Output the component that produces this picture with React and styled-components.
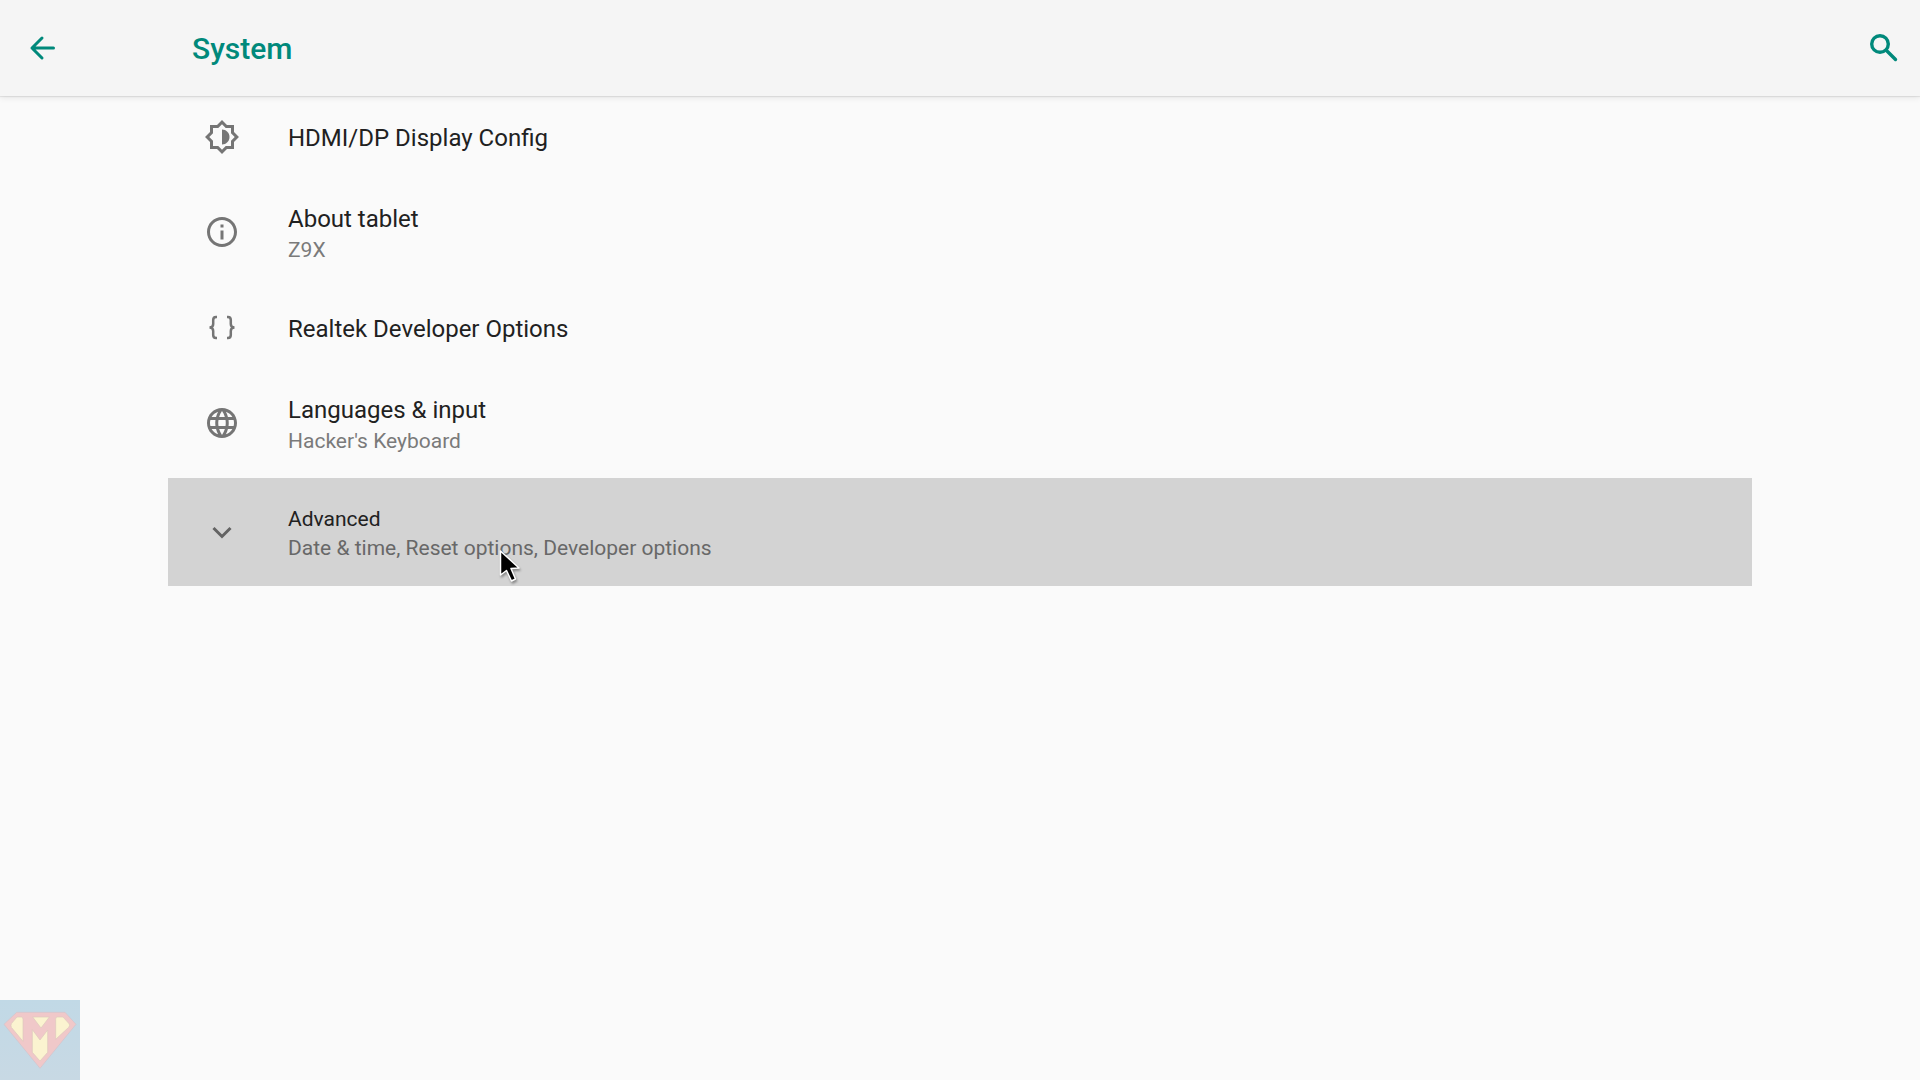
import React from "react";
import styled, { createGlobalStyle } from "styled-components";

const GlobalStyle = createGlobalStyle`
  *, *::before, *::after { box-sizing: border-box; }
  body {
    margin: 0;
    background: #fafafa;
    color: #212121;
    font-family: Roboto, "Noto Sans", sans-serif;
  }
`;

const Page = styled.div`
  min-height: 100vh;
  display: flex;
  flex-direction: column;
`;

const AppBar = styled.header`
  display: flex;
  align-items: center;
  height: 96px;
  padding: 0 18px 0 24px;
  background: #f5f5f5;
  color: #00897b;
  box-shadow: 0 1px 1px rgba(0, 0, 0, 0.08), 0 2px 6px rgba(0, 0, 0, 0.08);
`;

const IconButton = styled.button`
  display: flex;
  padding: 0;
  border: 0;
  background: none;
  color: inherit;
  cursor: inherit;
`;

const Title = styled.h1`
  flex: 1;
  margin: 0 0 0 132px;
  padding-top: 2px;
  font-size: 30px;
  line-height: 36px;
  font-weight: 500;
`;

const List = styled.ul`
  margin: 0;
  padding: 0 168px;
  list-style: none;
`;

const Row = styled.button`
  display: flex;
  align-items: center;
  gap: 48px;
  width: 100%;
  min-height: ${(p) => (p.$compact ? "108px" : p.$tall ? "110px" : "81px")};
  padding: 0 36px;
  border: 0;
  background: ${(p) => (p.$pressed ? "#d3d3d3" : "transparent")};
  color: inherit;
  font: inherit;
  text-align: left;
  cursor: inherit;
`;

const RowIcon = styled.span`
  display: flex;
  color: ${(p) => (p.$pressed ? "#636363" : "#757575")};
`;

const RowText = styled.span`
  display: flex;
  flex-direction: column;
  padding-top: 2px;
`;

const Label = styled.span`
  font-size: ${(p) => (p.$compact ? "21px" : "24px")};
  line-height: ${(p) => (p.$compact ? "30px" : "34px")};
`;

const Summary = styled.span`
  font-size: 21px;
  line-height: 28px;
  color: ${(p) => (p.$pressed ? "#686868" : "#7a7a7a")};
`;

const Pointer = styled.svg`
  position: absolute;
  left: 497px;
  top: 547px;
  pointer-events: none;
  filter: drop-shadow(1px 2px 1px rgba(0, 0, 0, 0.35));
`;

const Watermark = styled.svg`
  position: fixed;
  left: 0;
  bottom: 0;
`;

const Icon = ({ children }) => (
  <svg width="36" height="36" viewBox="0 0 24 24" fill="currentColor" aria-hidden="true">
    {children}
  </svg>
);

const LineIcon = ({ width = 3, cap = "round", children }) => (
  <svg
    width="36"
    height="36"
    viewBox="0 0 36 36"
    fill="none"
    stroke="currentColor"
    strokeWidth={width}
    strokeLinecap={cap}
    aria-hidden="true"
  >
    {children}
  </svg>
);

const BrightnessIcon = () => (
  <Icon>
    <path d="M20 8.69V4h-4.69L12 .69 8.69 4H4v4.69L.69 12 4 15.31V20h4.69L12 23.31 15.31 20H20v-4.69L23.31 12 20 8.69zm-2 5.79V18h-3.52L12 20.48 9.52 18H6v-3.52L3.52 12 6 9.52V6h3.52L12 3.52 14.48 6H18v3.52L20.48 12 18 14.48z" />
    <path d="M12 7v10c2.76 0 5-2.24 5-5s-2.24-5-5-5z" />
  </Icon>
);

const InfoIcon = () => (
  <Icon>
    <path d="M11 7h2v2h-2zm0 4h2v6h-2zm1-9C6.480 2 2 6.480 2 12s4.480 10 10 10 10-4.480 10-10S17.520 2 12 2zm0 18c-4.410 0-8-3.590-8-8s3.590-8 8-8 8 3.590 8 8-3.590 8-8 8z" />
  </Icon>
);

const BracesIcon = () => (
  <LineIcon width={2.5} cap="butt">
    <path d="M13 7H12Q9.200 7 9.200 10V14Q9.200 17.500 5.500 17.500Q9.200 17.500 9.200 21V25Q9.200 28 12 28H13" />
    <path d="M23 7H24Q26.800 7 26.800 10V14Q26.800 17.500 30.500 17.500Q26.800 17.500 26.800 21V25Q26.800 28 24 28H23" />
  </LineIcon>
);

const GlobeIcon = () => (
  <Icon>
    <path d="M11.99 2C6.47 2 2 6.48 2 12s4.47 10 9.99 10C17.52 22 22 17.52 22 12S17.52 2 11.99 2zm6.93 6h-2.95c-.32-1.25-.78-2.45-1.38-3.56 1.84.63 3.37 1.91 4.33 3.56zM12 4.04c.83 1.2 1.48 2.53 1.91 3.96h-3.82c.43-1.43 1.08-2.76 1.91-3.96zM4.26 14C4.1 13.36 4 12.69 4 12s.1-1.36.26-2h3.38c-.08.66-.14 1.32-.14 2s.06 1.34.14 2H4.26zm.82 2h2.95c.32 1.25.78 2.45 1.38 3.56-1.84-.63-3.37-1.9-4.33-3.56zm2.95-8H5.08c.96-1.66 2.49-2.93 4.33-3.56C8.81 5.55 8.35 6.75 8.03 8zM12 19.96c-.83-1.2-1.48-2.53-1.91-3.96h3.82c-.43 1.43-1.08 2.76-1.91 3.96zM14.34 14H9.66c-.09-.66-.16-1.32-.16-2s.07-1.35.16-2h4.68c.09.65.16 1.32.16 2s-.07 1.34-.16 2zm.25 5.56c.6-1.11 1.06-2.31 1.38-3.56h2.95c-.96 1.65-2.49 2.93-4.33 3.56zM16.36 14c.08-.66.14-1.32.14-2s-.06-1.34-.14-2h3.38c.16.64.26 1.31.26 2s-.1 1.36-.26 2h-3.38z" />
  </Icon>
);

const ChevronIcon = () => (
  <LineIcon width={3} cap="butt">
    <path d="M9.500 14L18 22.500L26.500 14" />
  </LineIcon>
);

const items = [
  { label: "HDMI/DP Display Config", icon: BrightnessIcon },
  { label: "About tablet", summary: "Z9X", icon: InfoIcon },
  { label: "Realtek Developer Options", icon: BracesIcon },
  { label: "Languages & input", summary: "Hacker's Keyboard", icon: GlobeIcon },
  {
    label: "Advanced",
    summary: "Date & time, Reset options, Developer options",
    icon: ChevronIcon,
    compact: true,
    pressed: true,
  },
];

export default function App() {
  return (
    <Page>
      <GlobalStyle />
      <AppBar>
        <IconButton type="button" aria-label="Navigate up">
          <LineIcon width={3}>
            <path d="M8 18H29.500M18 8L8 18L18 28" strokeLinejoin="round" />
          </LineIcon>
        </IconButton>
        <Title>System</Title>
        <IconButton type="button" aria-label="Search">
          <LineIcon width={3.4}>
            <circle cx="14" cy="14" r="8.300" />
            <path d="M20.500 20.500L29.500 29.500" />
          </LineIcon>
        </IconButton>
      </AppBar>
      <main>
        <List>
          {items.map(({ label, summary, icon: Glyph, compact, pressed }) => (
            <li key={label}>
              <Row type="button" $tall={Boolean(summary)} $compact={compact} $pressed={pressed}>
                <RowIcon $pressed={pressed}>
                  <Glyph />
                </RowIcon>
                <RowText>
                  <Label $compact={compact}>{label}</Label>
                  {summary && <Summary $pressed={pressed}>{summary}</Summary>}
                </RowText>
              </Row>
            </li>
          ))}
        </List>
      </main>
      <Watermark width="80" height="80" viewBox="0 0 240 240" aria-hidden="true">
        <defs>
          <linearGradient id="sky" x1="0" y1="0" x2="0" y2="1">
            <stop offset="0" stopColor="#c1d9e6" />
            <stop offset="1" stopColor="#c8d9e4" />
          </linearGradient>
        </defs>
        <rect width="240" height="240" fill="url(#sky)" />
        <path d="M50 37H195L228 73L120 205L12 73Z" fill="#f0c8c9" stroke="#d3c3ca" strokeWidth="2" />
        <g fill="#fbf3d0" stroke="#dcc8bd" strokeWidth="2">
          <path d="M51 51H64Q69 51 69 58V124L34 82Q31 76 35 70Z" />
          <path d="M98 51H148L123 84Z" />
          <path d="M171 51H189L208 72Q210 78 206 82L167 118V58Q167 51 171 51Z" />
          <path d="M97 89L120 120L143 90V157L120 183L97 157Z" />
        </g>
      </Watermark>
      <Pointer width="28" height="38" viewBox="0 0 28 38" aria-hidden="true">
        <path
          d="M3.500 4V28L9.500 23.500L14.500 34L18.500 32L14 21.500L22 21Z"
          fill="#000"
          stroke="#fff"
          strokeWidth="1.500"
          strokeLinejoin="round"
        />
      </Pointer>
    </Page>
  );
}
